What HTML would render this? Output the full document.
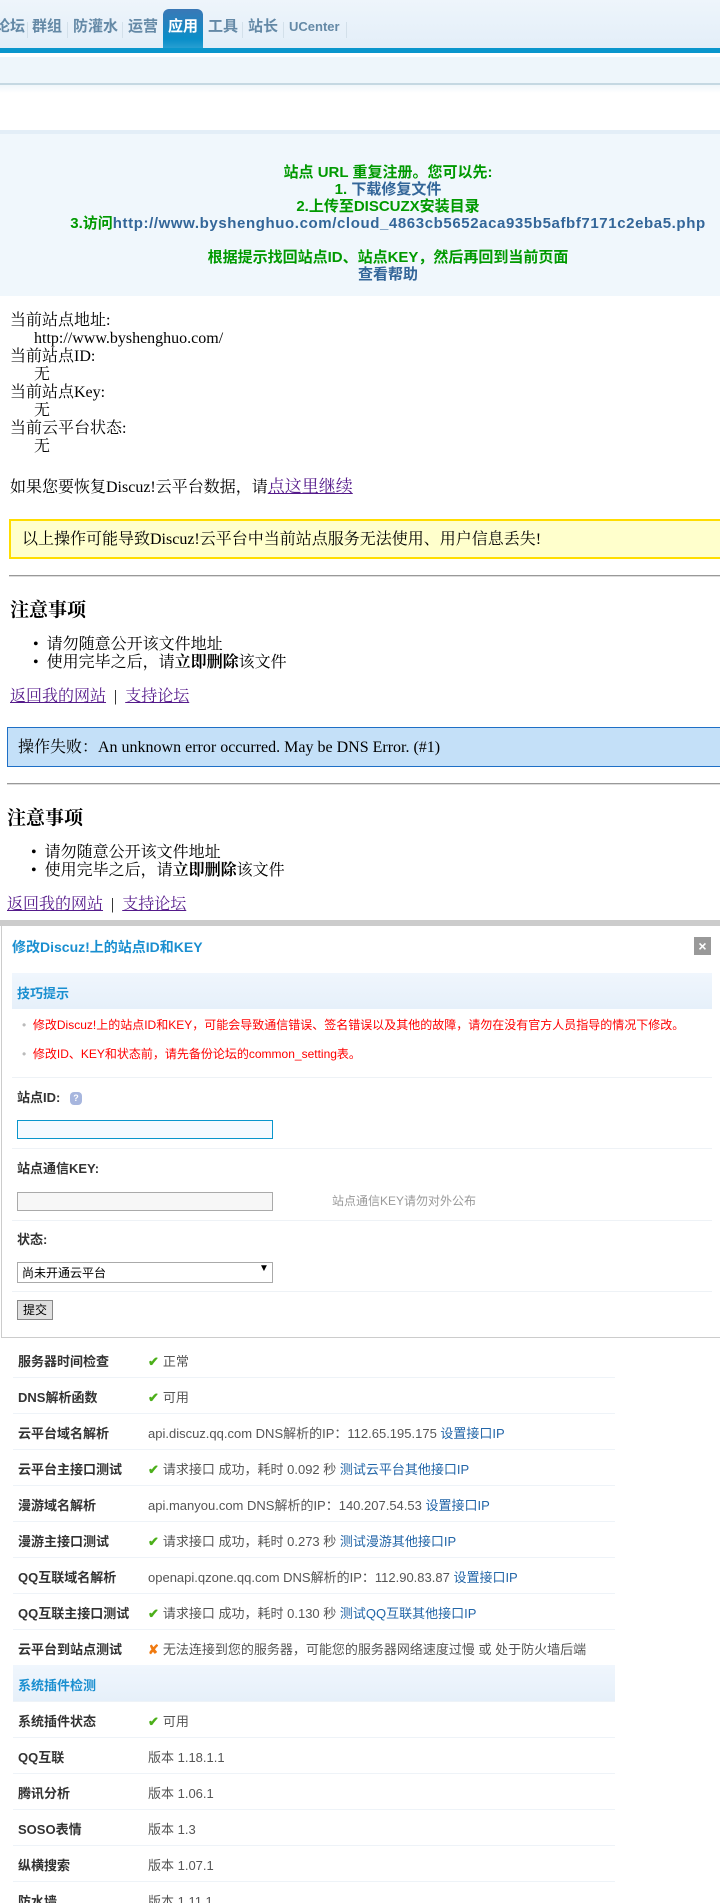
<!DOCTYPE html>
<html><head><meta charset="utf-8">
<style>
html,body{margin:0;padding:0;width:720px;height:1903px;overflow:hidden;background:#fff;}
body{position:relative;font-family:"Liberation Serif","Noto Serif CJK SC",serif;color:#000;}
.a{position:absolute;white-space:nowrap;}
.s{font-family:"Liberation Sans","Noto Sans CJK SC",sans-serif;}
.nav{position:absolute;left:0;top:0;width:720px;height:49px;background:linear-gradient(#eef5fb,#e3eef8);}
.nav span{position:absolute;top:17px;font:bold 15px/20px "Liberation Sans","Noto Sans CJK SC",sans-serif;color:#6489a6;}
.sepv{position:absolute;top:22px;width:1px;height:16px;background:#d3e0ea;}
.tab{position:absolute;left:163px;top:9px;width:40px;height:43px;border-radius:6px 6px 0 0;background:linear-gradient(#3a78b6,#0a8ec8 70%,#35a6d6);}
.m16{font-size:16px;line-height:18px;}
a{color:#551a8b;text-decoration:underline;}
.row{position:absolute;left:13px;width:602px;height:36px;border-bottom:1px solid #eef3f8;font-family:"Liberation Sans","Noto Sans CJK SC",sans-serif;font-size:13px;}
.row b{position:absolute;left:5px;top:10px;color:#333;}
.row i{position:absolute;left:135px;top:10px;font-style:normal;color:#555;white-space:nowrap;}
.row i em{font-style:normal;color:#2366a8;}
.ck{display:inline-block;color:#4caf1a;font-weight:bold;margin-right:4px;}
</style></head><body>
<div class="nav"></div>
<div class="tab"></div>
<div style="position:absolute;left:0;top:48px;width:720px;height:5px;background:#0a96cc"></div>
<div class="nav" style="top:0;background:none">
<span style="left:-5px">论坛</span><div class="sepv" style="left:27px"></div>
<span style="left:32px">群组</span><div class="sepv" style="left:67px"></div>
<span style="left:73px">防灌水</span><div class="sepv" style="left:122px"></div>
<span style="left:128px">运营</span>
<span style="left:168px;color:#fff">应用</span>
<span style="left:208px">工具</span><div class="sepv" style="left:242px"></div>
<span style="left:248px">站长</span><div class="sepv" style="left:283px"></div>
<span style="left:289px;font-size:13px">UCenter</span><div class="sepv" style="left:346px"></div>
</div>
<div style="position:absolute;left:0;top:57px;width:720px;height:26px;background:#eef6fb"></div>
<div style="position:absolute;left:0;top:83px;width:720px;height:2px;background:#c5d8e2"></div>
<div style="position:absolute;left:0;top:85px;width:720px;height:8px;background:linear-gradient(#f0f6fa,#fff)"></div>
<div style="position:absolute;left:0;top:130px;width:720px;height:4px;background:#e3eef7"></div>
<div style="position:absolute;left:0;top:134px;width:720px;height:162px;background:#f0f7fc"></div>
<div class="a s" style="left:0;top:164px;width:776px;text-align:center;font-weight:bold;font-size:15px;line-height:17px;color:#009900">
站点 URL 重复注册。您可以先:<br>1. <span style="color:#336699">下载修复文件</span><br>2.上传至DISCUZX安装目录<br>3.访问<span style="color:#336699;letter-spacing:0.6px">http://www.byshenghuo.com/cloud_4863cb5652aca935b5afbf7171c2eba5.php</span><br><br>根据提示找回站点ID、站点KEY，然后再回到当前页面<br><span style="color:#336699">查看帮助</span>
</div>

<div class="a m16" style="left:10px;top:312px">当前站点地址:<br>&nbsp;&nbsp;&nbsp;&nbsp;&nbsp;&nbsp;http://www.byshenghuo.com/<br>当前站点ID:<br>&nbsp;&nbsp;&nbsp;&nbsp;&nbsp;&nbsp;无<br>当前站点Key:<br>&nbsp;&nbsp;&nbsp;&nbsp;&nbsp;&nbsp;无<br>当前云平台状态:<br>&nbsp;&nbsp;&nbsp;&nbsp;&nbsp;&nbsp;无</div>
<div class="a m16" style="left:10px;top:478px">如果您要恢复Discuz!云平台数据，请<a href="#" style="font-size:17px">点这里继续</a></div>
<div style="position:absolute;left:9px;top:519px;width:720px;height:36px;background:#ffffcc;border:2px solid #ffdd00;border-right:none"></div>
<div class="a m16" style="left:22px;top:531px">以上操作可能导致Discuz!云平台中当前站点服务无法使用、用户信息丢失!</div>
<div style="position:absolute;left:9px;top:575px;width:711px;height:1px;background:#999;border-bottom:1px solid #ddd"></div>
<div class="a" style="left:10px;top:595px;font-weight:bold;font-size:19px">注意事项</div>
<div class="a m16" style="left:33px;top:636px">•&nbsp;&nbsp;请勿随意公开该文件地址<br>•&nbsp;&nbsp;使用完毕之后，请<b>立即删除</b>该文件</div>
<div class="a m16" style="left:10px;top:688px"><a href="#">返回我的网站</a> &nbsp;|&nbsp; <a href="#">支持论坛</a></div>
<div style="position:absolute;left:7px;top:727px;width:720px;height:38px;background:#c4e0f8;border:1px solid #1e6fc6;border-right:none"></div>
<div class="a m16" style="left:18px;top:739px">操作失败：An unknown error occurred. May be DNS Error. (#1)</div>
<div style="position:absolute;left:7px;top:783px;width:713px;height:1px;background:#999;border-bottom:1px solid #ddd"></div>
<div class="a" style="left:7px;top:803px;font-weight:bold;font-size:19px">注意事项</div>
<div class="a m16" style="left:31px;top:844px">•&nbsp;&nbsp;请勿随意公开该文件地址<br>•&nbsp;&nbsp;使用完毕之后，请<b>立即删除</b>该文件</div>
<div class="a m16" style="left:7px;top:896px"><a href="#">返回我的网站</a> &nbsp;|&nbsp; <a href="#">支持论坛</a></div>

<div style="position:absolute;left:0;top:920px;width:720px;height:6px;background:#cccccc"></div>
<div style="position:absolute;left:1px;top:926px;width:719px;height:411px;border-left:1px solid #ccc;border-bottom:1px solid #ccc"></div>
<div class="a s" style="left:12px;top:937px;font-weight:bold;font-size:14px;color:#1a8fd0">修改Discuz!上的站点ID和KEY</div>
<div class="a s" style="left:694px;top:937px;width:17px;height:18px;background:#999;color:#fff;font-weight:bold;font-size:14px;line-height:18px;text-align:center">×</div>
<div style="position:absolute;left:12px;top:973px;width:700px;height:36px;background:linear-gradient(#f0f6fd,#e6f0fa)"></div>
<div class="a s" style="left:17px;top:983px;font-weight:bold;font-size:13px;color:#1a8fd0">技巧提示</div>
<div class="a s" style="left:22px;top:1016px;font-size:12px;line-height:18px;color:#ff0000"><span style="color:#bbb">•</span>&nbsp;&nbsp;修改Discuz!上的站点ID和KEY，可能会导致通信错误、签名错误以及其他的故障，请勿在没有官方人员指导的情况下修改。</div>
<div class="a s" style="left:22px;top:1045px;font-size:12px;line-height:18px;color:#ff0000"><span style="color:#bbb">•</span>&nbsp;&nbsp;修改ID、KEY和状态前，请先备份论坛的common_setting表。</div>
<div style="position:absolute;left:12px;top:1077px;width:700px;height:1px;background:#eef2f6"></div>
<div class="a s" style="left:17px;top:1087px;font-weight:bold;font-size:13px;color:#333">站点ID: <span style="display:inline-block;width:12px;height:13px;border-radius:4px;background:#a7b6de;color:#fff;font-size:9px;line-height:13px;text-align:center;margin-left:6px;vertical-align:middle">?</span></div>
<div style="position:absolute;left:17px;top:1120px;width:254px;height:17px;border:1px solid #0a96cc;background:#f5faff"></div>
<div style="position:absolute;left:12px;top:1148px;width:700px;height:1px;background:#eef2f6"></div>
<div class="a s" style="left:17px;top:1158px;font-weight:bold;font-size:13px;color:#333">站点通信KEY:</div>
<div style="position:absolute;left:17px;top:1192px;width:254px;height:17px;border:1px solid #aaa;background:#f7f7f7"></div>
<div class="a s" style="left:332px;top:1192px;font-size:12px;color:#999">站点通信KEY请勿对外公布</div>
<div style="position:absolute;left:12px;top:1220px;width:700px;height:1px;background:#eef2f6"></div>
<div class="a s" style="left:17px;top:1229px;font-weight:bold;font-size:13px;color:#333">状态:</div>
<div style="position:absolute;left:17px;top:1262px;width:254px;height:19px;border:1px solid #aaa;background:#fff"></div>
<div class="a s" style="left:22px;top:1264px;font-size:12px;color:#000">尚未开通云平台</div>
<div class="a s" style="left:259px;top:1263px;font-size:10px">▼</div>
<div style="position:absolute;left:12px;top:1291px;width:700px;height:1px;background:#eef2f6"></div>
<div class="a s" style="left:17px;top:1300px;width:34px;height:18px;border:1px solid #888;background:#e0e0e0;font-size:12px;line-height:18px;text-align:center">提交</div>

<div class="row" style="top:1341px"><b>服务器时间检查</b><i><span class="ck">✔</span>正常</i></div>
<div class="row" style="top:1377px"><b>DNS解析函数</b><i><span class="ck">✔</span>可用</i></div>
<div class="row" style="top:1413px"><b>云平台域名解析</b><i>api.discuz.qq.com DNS解析的IP：112.65.195.175 <em>设置接口IP</em></i></div>
<div class="row" style="top:1449px"><b>云平台主接口测试</b><i><span class="ck">✔</span>请求接口 成功，耗时 0.092 秒 <em>测试云平台其他接口IP</em></i></div>
<div class="row" style="top:1485px"><b>漫游域名解析</b><i>api.manyou.com DNS解析的IP：140.207.54.53 <em>设置接口IP</em></i></div>
<div class="row" style="top:1521px"><b>漫游主接口测试</b><i><span class="ck">✔</span>请求接口 成功，耗时 0.273 秒 <em>测试漫游其他接口IP</em></i></div>
<div class="row" style="top:1557px"><b>QQ互联域名解析</b><i>openapi.qzone.qq.com DNS解析的IP：112.90.83.87 <em>设置接口IP</em></i></div>
<div class="row" style="top:1593px"><b>QQ互联主接口测试</b><i><span class="ck">✔</span>请求接口 成功，耗时 0.130 秒 <em>测试QQ互联其他接口IP</em></i></div>
<div class="row" style="top:1629px"><b>云平台到站点测试</b><i><span class="ck" style="color:#f07a10">✘</span>无法连接到您的服务器，可能您的服务器网络速度过慢 或 处于防火墙后端</i></div>
<div class="row" style="top:1665px;background:linear-gradient(#f0f6fd,#e6f0fa)"><b style="color:#1a8fd0">系统插件检测</b></div>
<div class="row" style="top:1701px"><b>系统插件状态</b><i><span class="ck">✔</span>可用</i></div>
<div class="row" style="top:1737px"><b>QQ互联</b><i>版本 1.18.1.1</i></div>
<div class="row" style="top:1773px"><b>腾讯分析</b><i>版本 1.06.1</i></div>
<div class="row" style="top:1809px"><b>SOSO表情</b><i>版本 1.3</i></div>
<div class="row" style="top:1845px"><b>纵横搜索</b><i>版本 1.07.1</i></div>
<div class="row" style="top:1881px"><b>防水墙</b><i>版本 1.11.1</i></div>
</body></html>
